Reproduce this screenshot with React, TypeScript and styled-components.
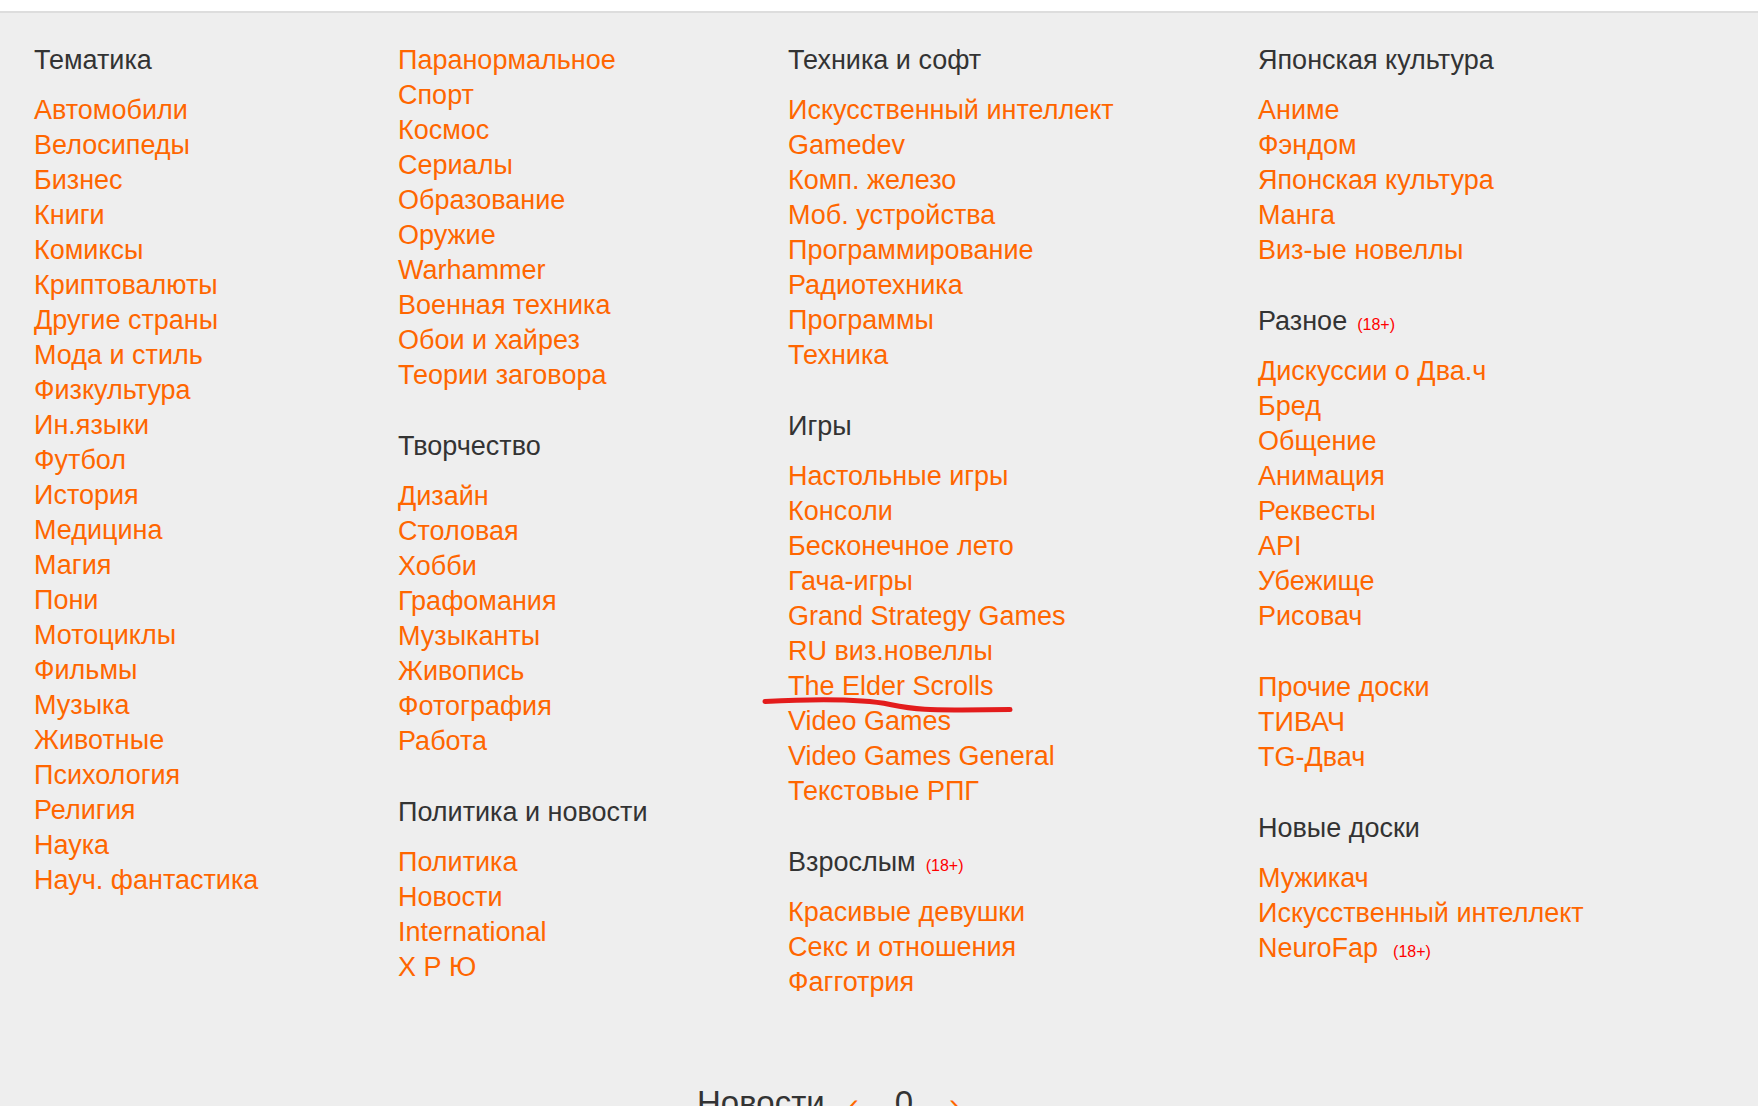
import React from "react"
import styled, { createGlobalStyle } from 'styled-components'

const GlobalStyle = createGlobalStyle`
  html, body {
    margin: 0;
    padding: 0;
    background: #eeeeee;
  }
  body {
    font-family: "Liberation Sans", Arial, sans-serif;
  }
`

const Page = styled.div`
  position: relative;
  min-height: 1106px;
  background: #eeeeee;
`

const TopBar = styled.div`
  height: 11px;
  background: #ffffff;
  border-bottom: 2px solid #dddddd;
`

const Boards = styled.div`
  display: grid;
  grid-template-columns: 364px 390px 470px auto;
  padding: 30px 0 0 34px;
`

const Column = styled.div`
  display: flex;
  flex-direction: column;
`

const Group = styled.div`
  display: flex;
  flex-direction: column;
  margin-bottom: 36px;
`

const Title = styled.div`
  color: #333333;
  font-size: 27px;
  line-height: 35px;
  height: 35px;
  margin-bottom: 15px;
  white-space: nowrap;
`

const Row = styled.div`
  height: 35px;
  line-height: 35px;
  white-space: nowrap;
`

const BoardLink = styled.a`
  color: #ff6600;
  font-size: 27px;
  text-decoration: none;
  &:hover {
    color: #ff0000;
  }
`

const Adult = styled.span<{ gap: number }>`
  color: #ff0000;
  font-size: 16px;
  line-height: 1;
  vertical-align: baseline;
  margin-left: ${(p) => p.gap}px;
`

const Footer = styled.div`
  display: flex;
  align-items: baseline;
  gap: 24px;
  padding-left: 697px;
  margin-top: 47px;
  font-size: 33px;
  line-height: 40px;
  color: #333333;
`

const Arrow = styled.span`
  color: #ff6600;
  font-size: 30px;
`

const Counter = styled.span`
  margin: 0 12px;
`

const Scribble = styled.svg`
  position: absolute;
  left: 0;
  top: 0;
  width: 1758px;
  height: 1106px;
  pointer-events: none;
`

type Item = { name: string; adult?: boolean }
type BoardGroup = { title?: string; adult?: boolean; items: Item[] }

const l = (...names: string[]): Item[] => names.map((name) => ({ name }))

const columns: BoardGroup[][] = [
  [
    {
      title: "Тематика",
      items: l(
        "Автомобили", "Велосипеды", "Бизнес", "Книги", "Комиксы", "Криптовалюты",
        "Другие страны", "Мода и стиль", "Физкультура", "Ин.языки", "Футбол", "История",
        "Медицина", "Магия", "Пони", "Мотоциклы", "Фильмы", "Музыка", "Животные",
        "Психология", "Религия", "Наука", "Науч. фантастика"
      ),
    },
  ],
  [
    {
      items: l(
        "Паранормальное", "Спорт", "Космос", "Сериалы", "Образование", "Оружие",
        "Warhammer", "Военная техника", "Обои и хайрез", "Теории заговора"
      ),
    },
    {
      title: "Творчество",
      items: l("Дизайн", "Столовая", "Хобби", "Графомания", "Музыканты", "Живопись", "Фотография", "Работа"),
    },
    {
      title: "Политика и новости",
      items: l("Политика", "Новости", "International", "Х Р Ю"),
    },
  ],
  [
    {
      title: "Техника и софт",
      items: l(
        "Искусственный интеллект", "Gamedev", "Комп. железо", "Моб. устройства",
        "Программирование", "Радиотехника", "Программы", "Техника"
      ),
    },
    {
      title: "Игры",
      items: l(
        "Настольные игры", "Консоли", "Бесконечное лето", "Гача-игры", "Grand Strategy Games",
        "RU виз.новеллы", "The Elder Scrolls", "Video Games", "Video Games General", "Текстовые РПГ"
      ),
    },
    {
      title: "Взрослым",
      adult: true,
      items: l("Красивые девушки", "Секс и отношения", "Фагготрия"),
    },
  ],
  [
    {
      title: "Японская культура",
      items: l("Аниме", "Фэндом", "Японская культура", "Манга", "Виз-ые новеллы"),
    },
    {
      title: "Разное",
      adult: true,
      items: l("Дискуссии о Два.ч", "Бред", "Общение", "Анимация", "Реквесты", "API", "Убежище", "Рисовач"),
    },
    {
      items: l("Прочие доски", "ТИВАЧ", "TG-Двач"),
    },
    {
      title: "Новые доски",
      items: [...l("Мужикач", "Искусственный интеллект"), { name: "NeuroFap", adult: true }],
    },
  ],
]

const App: React.FC = () => {
  return (
    <Page>
      <GlobalStyle />
      <TopBar />
      <Boards>
        {columns.map((groups, i) => (
          <Column key={i}>
            {groups.map((group, j) => (
              <Group key={j}>
                {group.title && (
                  <Title>
                    {group.title}
                    {group.adult && <Adult gap={10}>(18+)</Adult>}
                  </Title>
                )}
                {group.items.map((item) => (
                  <Row key={item.name}>
                    <BoardLink href="#">{item.name}</BoardLink>
                    {item.adult && <Adult gap={15}>(18+)</Adult>}
                  </Row>
                ))}
              </Group>
            ))}
          </Column>
        ))}
      </Boards>
      <Footer>
        <span>Новости</span>
        <Arrow>‹</Arrow>
        <Counter>0</Counter>
        <Arrow>›</Arrow>
      </Footer>
      {/* red marker stroke under "The Elder Scrolls" */}
      <Scribble viewBox="0 0 1758 1106">
        <path
          d="M765 701.5 C 815 699, 860 698.5, 890 704.5 S 935 710, 962 710 L 1010 709.5"
          fill="none"
          stroke="#e31c1c"
          strokeWidth={5}
          strokeLinecap="round"
        />
      </Scribble>
    </Page>
  )
}

export default App
